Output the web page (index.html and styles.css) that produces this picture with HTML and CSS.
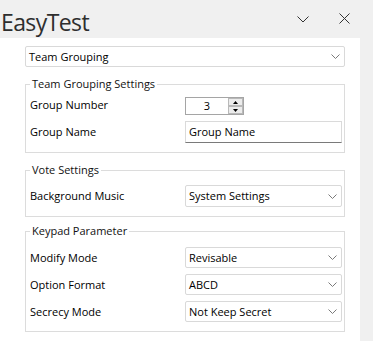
FILE: index.html
```html
<!DOCTYPE html>
<html>
<head>
<meta charset="utf-8">
<link rel="stylesheet" href="styles.css">
</head>
<body>
<div class="window">
  <div class="titlebar">
    <span class="title">EasyTest</span>
    <svg class="tb-min" width="12" height="7" viewBox="0 0 12 7"><path d="M0.5 0.5 L6 6 L11.5 0.5" fill="none" stroke="#333" stroke-width="1"/></svg>
    <svg class="tb-close" width="11" height="11" viewBox="0 0 11 11"><path d="M0.5 0.5 L10.5 10.5 M10.5 0.5 L0.5 10.5" fill="none" stroke="#333" stroke-width="1"/></svg>
  </div>
  <div class="panel">
    <div class="select select-top">
      <span>Team Grouping</span>
      <svg class="chev" width="9" height="5" viewBox="0 0 9 5"><path d="M0.5 0.5 L4.5 4.5 L8.5 0.5" fill="none" stroke="#7a7a7a" stroke-width="1"/></svg>
    </div>

    <div class="group group-team">
      <div class="legend">Team Grouping Settings</div>
      <div class="rows rows-team">
        <div class="row row-spin">
          <span class="label">Group Number</span>
          <div class="spinner">
            <span class="spin-val">3</span>
            <div class="spin-btns">
              <div class="spin-btn"><svg width="5" height="3" viewBox="0 0 5 3"><path d="M2.5 0 L5 3 L0 3 Z" fill="#000"/></svg></div>
              <div class="spin-btn"><svg width="5" height="3" viewBox="0 0 5 3"><path d="M0 0 L5 0 L2.5 3 Z" fill="#000"/></svg></div>
            </div>
          </div>
        </div>
        <div class="row">
          <span class="label">Group Name</span>
          <div class="textbox">Group Name</div>
        </div>
      </div>
    </div>

    <div class="group group-vote">
      <div class="legend">Vote Settings</div>
      <div class="rows rows-vote">
        <div class="row">
          <span class="label">Background Music</span>
          <div class="select">
            <span>System Settings</span>
            <svg class="chev" width="9" height="5" viewBox="0 0 9 5"><path d="M0.5 0.5 L4.5 4.5 L8.5 0.5" fill="none" stroke="#7a7a7a" stroke-width="1"/></svg>
          </div>
        </div>
      </div>
    </div>

    <div class="group group-keypad">
      <div class="legend">Keypad Parameter</div>
      <div class="rows rows-keypad">
        <div class="row">
          <span class="label">Modify Mode</span>
          <div class="select select-sm">
            <span>Revisable</span>
            <svg class="chev" width="9" height="5" viewBox="0 0 9 5"><path d="M0.5 0.5 L4.5 4.5 L8.5 0.5" fill="none" stroke="#7a7a7a" stroke-width="1"/></svg>
          </div>
        </div>
        <div class="row">
          <span class="label">Option Format</span>
          <div class="select select-sm">
            <span>ABCD</span>
            <svg class="chev" width="9" height="5" viewBox="0 0 9 5"><path d="M0.5 0.5 L4.5 4.5 L8.5 0.5" fill="none" stroke="#7a7a7a" stroke-width="1"/></svg>
          </div>
        </div>
        <div class="row">
          <span class="label">Secrecy Mode</span>
          <div class="select select-sm">
            <span>Not Keep Secret</span>
            <svg class="chev" width="9" height="5" viewBox="0 0 9 5"><path d="M0.5 0.5 L4.5 4.5 L8.5 0.5" fill="none" stroke="#7a7a7a" stroke-width="1"/></svg>
          </div>
        </div>
      </div>
    </div>
  </div>
</div>
</body>
</html>
```

FILE: styles.css
```css
* {
  box-sizing: border-box;
}

html, body {
  margin: 0;
  padding: 0;
}

body {
  width: 373px;
  height: 341px;
  overflow: hidden;
  background: #f0f0f0;
  font-family: "Open Sans", "Noto Sans", sans-serif;
  font-size: 11px;
  color: #000;
}

.window {
  display: flex;
  flex-direction: column;
  height: 341px;
}

.titlebar {
  height: 38px;
  display: flex;
  align-items: flex-start;
  flex-shrink: 0;
}

.title {
  margin: 11px 0 0 1px;
  font-size: 23px;
  line-height: 23px;
  letter-spacing: -0.6px;
  color: #2e2e2e;
}

.tb-min {
  margin: 16px 0 0 auto;
  display: block;
}

.tb-close {
  margin: 13px 23px 0 30px;
  display: block;
}

.panel {
  width: 360px;
  flex: 1;
  background: #fff;
  padding: 8px 15px 0 25px;
}

.select {
  height: 22px;
  border: 1px solid #d9d9d9;
  border-radius: 2px;
  display: flex;
  align-items: center;
  justify-content: space-between;
  padding: 0 4px 0 3px;
  background: #fff;
  line-height: 16px;
}

.select-top {
  height: 21px;
}

.select-sm {
  height: 21px;
}

.chev {
  display: block;
}

.group {
  border: 1px solid #dcdcdc;
  padding: 0 2px 9px 4px;
  display: flex;
  flex-direction: column;
}

.group-team {
  margin-top: 17px;
}

.group-vote {
  margin-top: 17px;
}

.group-keypad {
  margin-top: 14px;
}

.legend {
  align-self: flex-start;
  height: 16px;
  line-height: 16px;
  margin: -9px 0 0 0;
  padding: 0 2px;
  background: #fff;
  color: #111;
}

.rows {
  display: flex;
  flex-direction: column;
}

.rows-team {
  margin-top: 1px;
  gap: 4px;
}

.rows-vote {
  margin-top: 7px;
}

.rows-keypad {
  margin-top: 8px;
  gap: 6px;
}

.row {
  display: grid;
  grid-template-columns: 155px 1fr;
  align-items: center;
}

.row-spin {
  height: 24px;
}

.label {
  line-height: 16px;
}

.textbox {
  height: 22px;
  border: 1px solid #dadada;
  border-bottom-color: #7a7a7a;
  padding: 0 3px;
  display: flex;
  align-items: center;
  line-height: 16px;
}

.spinner {
  width: 59px;
  height: 18px;
  border: 1px solid #a5a5a5;
  display: flex;
  align-items: stretch;
  margin-top: 2px;
}

.spin-val {
  flex: 1;
  text-align: center;
  line-height: 16px;
}

.spin-btns {
  width: 15px;
  display: flex;
  flex-direction: column;
}

.spin-btn {
  flex: 1;
  border: 1px solid #b9b9b9;
  background: #ececec;
  display: flex;
  align-items: center;
  justify-content: center;
}

.spin-btn svg {
  display: block;
}
```
